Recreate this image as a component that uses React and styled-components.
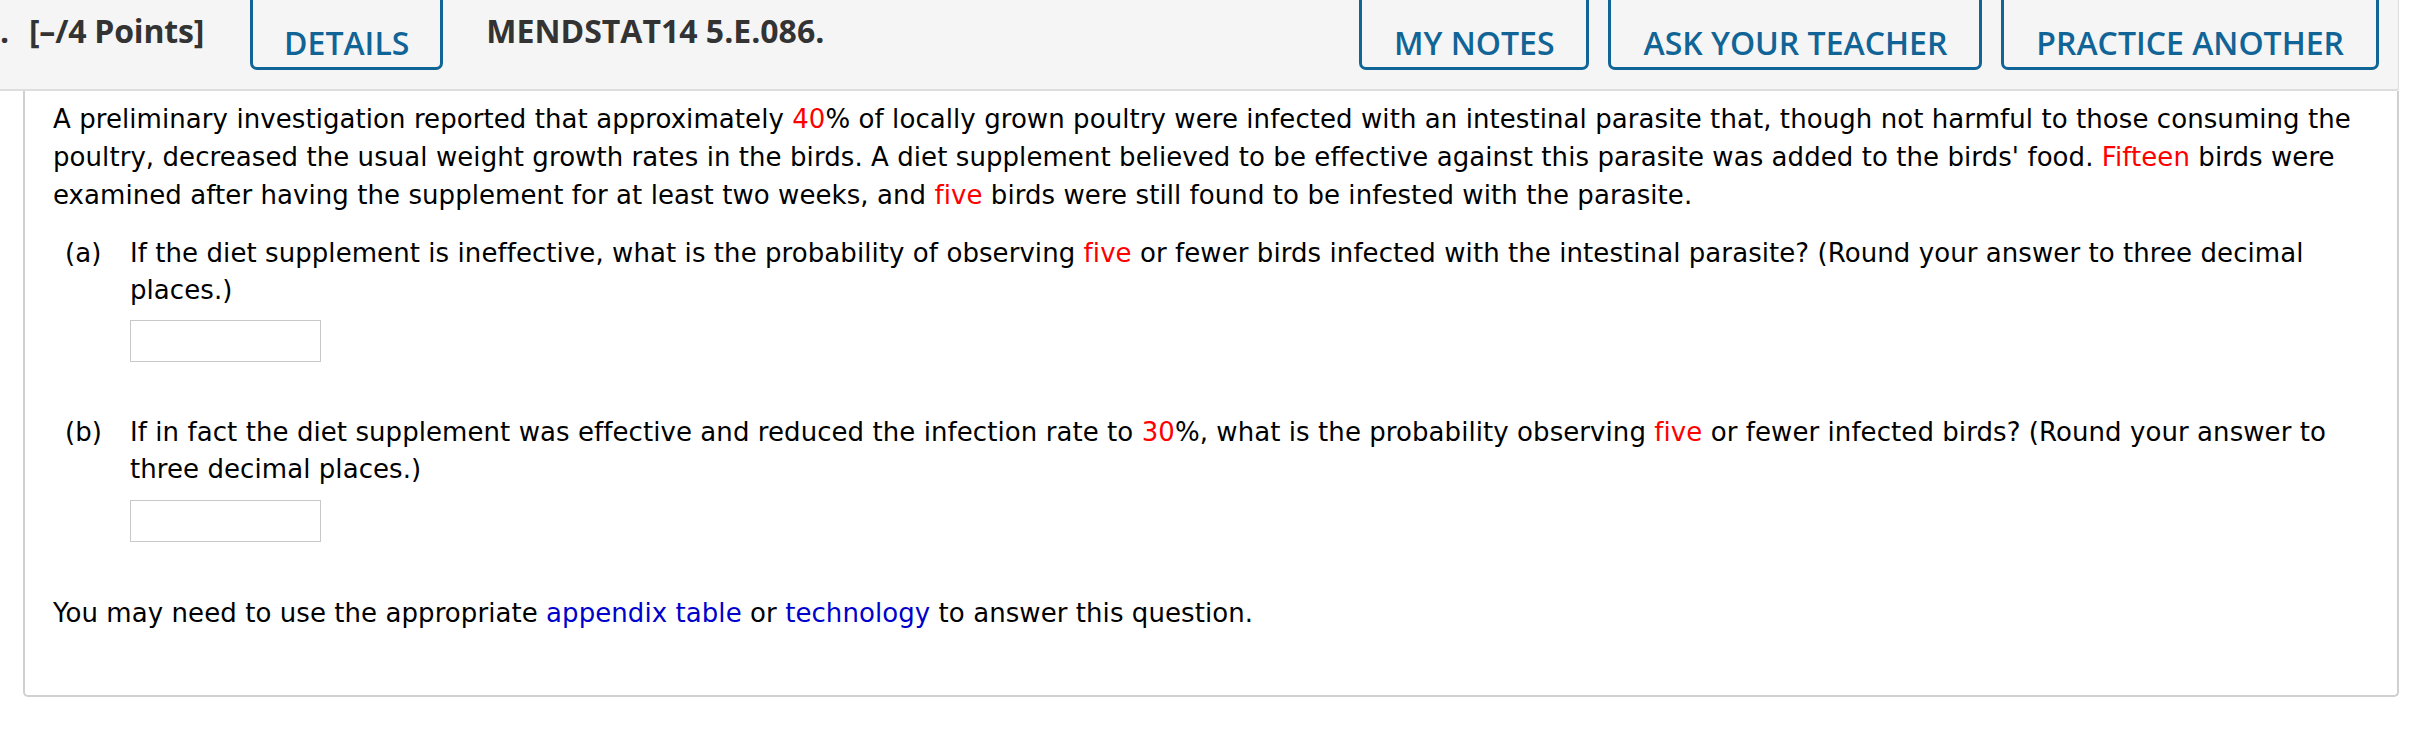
import React from 'react';
import styled, { createGlobalStyle } from 'styled-components';

const GlobalStyle = createGlobalStyle`
  html, body { margin: 0; padding: 0; background: #ffffff; }
  body { width: 2430px; height: 750px; overflow: hidden; }
`;

const Page = styled.div`
  width: 2430px;
  height: 750px;
  background: #ffffff;
  display: flex;
  flex-direction: column;
`;

const Header = styled.header`
  box-sizing: border-box;
  width: 2399px;
  height: 91px;
  background: #f5f5f5;
  border-bottom: 2px solid #dddddd;
  border-right: 1px solid #dddddd;
  border-bottom-right-radius: 3px;
  display: flex;
  align-items: flex-start;
  padding-right: 19px;
  font-family: "Open Sans", "Liberation Sans", sans-serif;
  font-size: 32px;
`;

const HeadText = styled.div`
  padding-top: 9px;
  font-weight: 700;
  color: #333333;
  white-space: nowrap;
  display: flex;
  gap: ${(p) => p.$gap || 0}px;
  margin-left: ${(p) => p.$ml || 0}px;
  letter-spacing: ${(p) => p.$ls || 0}px;
`;

const ButtonRow = styled.div`
  margin-left: auto;
  display: flex;
  gap: 19px;
`;

const TabButton = styled.button`
  box-sizing: border-box;
  height: 70px;
  margin: 0;
  margin-left: ${(p) => p.$ml || 0}px;
  padding: 21px ${(p) => p.$px || 32}px 0;
  background: transparent;
  border: 3px solid #116496;
  border-top: none;
  border-radius: 0 0 7px 7px;
  font-family: "Open Sans", "Liberation Sans", sans-serif;
  font-size: 32px;
  font-weight: 600;
  line-height: normal;
  color: #116496;
  white-space: nowrap;
  display: flex;
  align-items: flex-start;
  cursor: pointer;
`;

const Card = styled.div`
  box-sizing: border-box;
  margin-left: 23px;
  width: 2376px;
  height: 606px;
  border: 2px solid #d0d0d0;
  border-top: none;
  border-radius: 0 0 5px 5px;
  padding: 9px 27px 0 28px;
  font-family: "DejaVu Sans", Verdana, sans-serif;
  font-size: 26px;
  letter-spacing: 0.07px;
  color: #000000;
`;

const Para = styled.p`
  margin: 0;
  line-height: 38px;
  margin-top: ${(p) => p.$mt || 0}px;
`;

const Hi = styled.span`
  color: #ff0000;
`;

const Link = styled.a`
  color: #0000cc;
  text-decoration: none;
`;

const Part = styled.div`
  display: grid;
  grid-template-columns: 65px 1fr;
  padding-left: 12px;
  margin-top: ${(p) => p.$mt}px;
  line-height: 37px;
`;

const PartBody = styled.div`
  display: flex;
  flex-direction: column;
  align-items: flex-start;
`;

const Answer = styled.input`
  box-sizing: border-box;
  width: 191px;
  height: 42px;
  margin-top: ${(p) => p.$mt}px;
  border: 1px solid #c8c8c8;
  padding: 0 6px;
  font-family: "DejaVu Sans", Verdana, sans-serif;
  font-size: 22px;
  outline: none;
`;

export default function App() {
  return (
    <Page>
      <GlobalStyle />
      <Header>
        <HeadText $gap={20} $ls={-0.2}>
          <span>.</span>
          <span>[–/4 Points]</span>
        </HeadText>
        <TabButton $ml={46} $px={31}>DETAILS</TabButton>
        <HeadText $ml={43}>MENDSTAT14 5.E.086.</HeadText>
        <ButtonRow>
          <TabButton>MY NOTES</TabButton>
          <TabButton>ASK YOUR TEACHER</TabButton>
          <TabButton>PRACTICE ANOTHER</TabButton>
        </ButtonRow>
      </Header>
      <Card>
        <Para>
          A preliminary investigation reported that approximately <Hi>40</Hi>% of locally grown poultry were infected with an intestinal parasite that, though not harmful to those consuming the poultry, decreased the usual weight growth rates in the birds. A diet supplement believed to be effective against this parasite was added to the birds' food. <Hi>Fifteen</Hi> birds were examined after having the supplement for at least two weeks, and <Hi>five</Hi> birds were still found to be infested with the parasite.
        </Para>
        <Part $mt={21}>
          <span>(a)</span>
          <PartBody>
            <span>
              If the diet supplement is ineffective, what is the probability of observing <Hi>five</Hi> or fewer birds infected with the intestinal parasite? (Round your answer to three decimal places.)
            </span>
            <Answer type="text" $mt={11} />
          </PartBody>
        </Part>
        <Part $mt={52}>
          <span>(b)</span>
          <PartBody>
            <span>
              If in fact the diet supplement was effective and reduced the infection rate to <Hi>30</Hi>%, what is the probability observing <Hi>five</Hi> or fewer infected birds? (Round your answer to three decimal places.)
            </span>
            <Answer type="text" $mt={12} />
          </PartBody>
        </Part>
        <Para $mt={52}>
          You may need to use the appropriate <Link href="#">appendix table</Link> or <Link href="#">technology</Link> to answer this question.
        </Para>
      </Card>
    </Page>
  );
}
